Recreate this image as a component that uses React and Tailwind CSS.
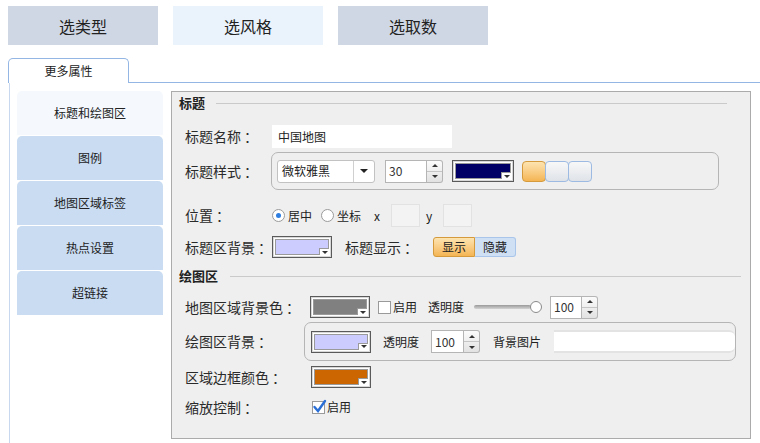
import React from "react";

const FONT = { fontFamily: '"Microsoft YaHei", "Noto Sans CJK SC", "Noto Sans", sans-serif' };

const SIDE_ITEMS = ["标题和绘图区", "图例", "地图区域标签", "热点设置", "超链接"];

function ColorBox({ color, w = "w-[60px]" }) {
  return (
    <div className={`${w} h-[22px] border border-[#5a5a5a] bg-white p-[2px] shadow-[inset_0_0_0_1px_#d8d8d8]`}>
      <div className="relative h-full border border-[#9a9a9a]" style={{ background: color }}>
        <div className="absolute right-[-1px] bottom-[-1px] w-[10px] h-[7px] bg-white border-l border-t border-[#9a9a9a] flex items-center justify-center">
          <div className="w-0 h-0 border-l-[3px] border-r-[3px] border-t-[3px] border-l-transparent border-r-transparent border-t-[#333]" />
        </div>
      </div>
    </div>
  );
}

function Spinner({ value, w = "w-[34px]" }) {
  return (
    <div className="flex h-[23px]">
      <div className={`${w} h-full bg-white border border-[#b5b5b5] flex items-center pl-[3px] text-[12px] text-[#333]`}>{value}</div>
      <div className="w-[16px] h-full border border-l-0 border-[#b5b5b5] rounded-r-[3px] flex flex-col bg-gradient-to-b from-[#fbfbfb] to-[#e2e2e2]">
        <div className="flex-1 flex items-center justify-center border-b border-[#c5c5c5]">
          <div className="w-0 h-0 border-l-[3px] border-r-[3px] border-b-[3px] border-l-transparent border-r-transparent border-b-[#333]" />
        </div>
        <div className="flex-1 flex items-center justify-center">
          <div className="w-0 h-0 border-l-[3px] border-r-[3px] border-t-[3px] border-l-transparent border-r-transparent border-t-[#333]" />
        </div>
      </div>
    </div>
  );
}

function Checkbox({ checked }) {
  return (
    <div className="relative w-[13px] h-[13px] bg-white border border-[#9a9a9a]">
      {checked && (
        <svg className="absolute left-[-1px] top-[-3px]" width="15" height="15" viewBox="0 0 15 15">
          <path d="M2.5 8 L6 12 L13 2" fill="none" stroke="#2a6fd6" strokeWidth="2.4" strokeLinecap="round" />
        </svg>
      )}
    </div>
  );
}

function Radio({ checked }) {
  return (
    <div className="w-[13px] h-[13px] rounded-full bg-white border border-[#9a9a9a] flex items-center justify-center">
      {checked && <div className="w-[5px] h-[5px] rounded-full bg-[#2d7ee0]" />}
    </div>
  );
}

function SectionHead({ title, lineEnd, gap }) {
  return (
    <div className="flex items-center">
      <span className="text-[13px] font-bold text-[#222]">{title}</span>
      <div className={`flex-1 h-px bg-[#cacaca] ${gap} ${lineEnd}`} />
    </div>
  );
}

function Label({ text, w }) {
  return (
    <span className={`${w} text-[14px] text-[#2a2a2a] whitespace-nowrap`}>
      {text}
      <span className="ml-[3px]">：</span>
    </span>
  );
}

export default function App() {
  return (
    <div className="w-[760px] h-[443px] bg-white overflow-hidden text-[#222]" style={FONT}>
      {/* top step buttons */}
      <div className="flex gap-[15px] pl-[8px] pt-[6px]">
        <div className="w-[150px] h-[39px] bg-[#d0d7e4] flex items-center justify-center text-[16px]">选类型</div>
        <div className="w-[150px] h-[39px] bg-[#eaf2fb] flex items-center justify-center text-[16px]">选风格</div>
        <div className="w-[150px] h-[39px] bg-[#d0d7e4] flex items-center justify-center text-[16px]">选取数</div>
      </div>

      {/* tab strip */}
      <div className="flex mt-[13px] pl-[8px]">
        <div className="w-[121px] h-[25px] border border-b-0 border-[#94b6e4] rounded-t-[5px] bg-white flex items-center justify-center text-[12px]">
          更多属性
        </div>
        <div className="flex-1 border-b border-[#94b6e4]" />
      </div>

      <div className="flex ml-[9px] border-l border-[#c8d8ee] h-[360px]">
        {/* side menu */}
        <div className="w-[146px] ml-[7px] pt-[8px] flex flex-col gap-px">
          {SIDE_ITEMS.map((item, i) => (
            <div
              key={item}
              className={`h-[44px] rounded-t-[5px] flex items-center justify-center text-[12px] ${
                i === 0 ? "bg-[#f5f9fe]" : "bg-[#c9dcf2]"
              }`}
            >
              {item}
            </div>
          ))}
        </div>

        {/* property panel */}
        <div className="w-[580px] ml-[8px] mt-[8px] h-[348px] bg-[#efefef] border border-[#ababab] pl-[7px] text-[13px]">
          <div className="h-[22px] flex flex-col justify-center">
            <SectionHead title="标题" gap="ml-[11px]" lineEnd="mr-[23px]" />
          </div>

          <div className="mt-[11px] h-[23px] flex items-center pl-[6px]">
            <Label text="标题名称" w="w-[87px]" />
            <div className="w-[180px] h-[23px] bg-white flex items-center pl-[6px] text-[12px]">中国地图</div>
          </div>

          <div className="mt-[4px] h-[38px] flex items-center pl-[6px]">
            <Label text="标题样式" w="w-[86px]" />
            <div className="w-[448px] h-[38px] border border-[#b5b5b5] rounded-[7px] flex items-center pl-[5px]">
              <div className="w-[98px] h-[23px] bg-white border border-[#c2c2c2] rounded-[3px] flex">
                <div className="flex-1 flex items-center pl-[4px] text-[12px]">微软雅黑</div>
                <div className="w-[21px] border-l border-[#d0d0d0] flex items-center justify-center">
                  <div className="w-0 h-0 border-l-[4px] border-r-[4px] border-t-[4px] border-l-transparent border-r-transparent border-t-[#222]" />
                </div>
              </div>
              <div className="ml-[10px]">
                <Spinner value="30" w="w-[42px]" />
              </div>
              <div className="ml-[9px]">
                <ColorBox color="#000066" w="w-[62px]" />
              </div>
              <div className="ml-[8px] flex">
                <div className="w-[24px] h-[21px] rounded-[4px] border border-[#d49a3c] bg-gradient-to-b from-[#fde4b0] to-[#f4b553]" />
                <div className="w-[24px] h-[21px] rounded-[4px] border border-[#9dbbe2] bg-gradient-to-b from-[#f8f8f8] to-[#dfe3e8] -ml-[1px]" />
                <div className="w-[24px] h-[21px] rounded-[4px] border border-[#9dbbe2] bg-gradient-to-b from-[#f8f8f8] to-[#dfe3e8] -ml-[1px]" />
              </div>
            </div>
          </div>

          <div className="mt-[14px] h-[23px] flex items-center pl-[6px]">
            <Label text="位置" w="w-[87px]" />
            <Radio checked />
            <span className="ml-[3px] text-[12px]">居中</span>
            <div className="ml-[9px]">
              <Radio />
            </div>
            <span className="ml-[3px] text-[12px]">坐标</span>
            <span className="ml-[13px] text-[12px]">x</span>
            <div className="ml-[11px] w-[29px] h-[23px] bg-[#f3f3f3] border border-[#e2e2e2]" />
            <span className="ml-[6px] text-[12px]">y</span>
            <div className="ml-[11px] w-[29px] h-[23px] bg-[#f3f3f3] border border-[#e2e2e2]" />
          </div>

          <div className="mt-[9px] h-[22px] flex items-center pl-[6px]">
            <Label text="标题区背景" w="w-[87px]" />
            <ColorBox color="#ccccff" />
            <span className="ml-[13px] text-[14px] text-[#2a2a2a]">
              标题显示<span className="ml-[3px]">：</span>
            </span>
            <div className="ml-[15px] flex text-[12px]">
              <div className="w-[42px] h-[20px] rounded-l-[3px] border border-[#d49a3c] bg-gradient-to-b from-[#fde4b0] to-[#f4b553] flex items-center justify-center">显示</div>
              <div className="w-[41px] h-[20px] rounded-r-[3px] border border-l-0 border-[#a9c6ea] bg-[#cfe0f5] flex items-center justify-center">隐藏</div>
            </div>
          </div>

          <div className="mt-[9px] h-[18px] flex flex-col justify-center">
            <SectionHead title="绘图区" gap="ml-[12px]" lineEnd="mr-[9px]" />
          </div>

          <div className="mt-[11px] h-[22px] flex items-center pl-[6px]">
            <Label text="地图区域背景色" w="w-[125px]" />
            <ColorBox color="#808080" />
            <div className="ml-[8px]">
              <Checkbox />
            </div>
            <span className="ml-[2px] text-[12px]">启用</span>
            <span className="ml-[11px] text-[12px]">透明度</span>
            <div className="ml-[10px] flex items-center">
              <div className="w-[57px] h-[4px] rounded-full bg-gradient-to-b from-[#9a9a9a] to-[#d4d4d4]" />
              <div className="w-[12px] h-[12px] rounded-full bg-white border border-[#8a8a8a] -ml-[1px]" />
            </div>
            <div className="ml-[8px]">
              <Spinner value="100" w="w-[32px]" />
            </div>
          </div>

          <div className="mt-[4px] h-[39px] flex items-center pl-[6px]">
            <Label text="绘图区背景" w="w-[119px]" />
            <div className="w-[432px] h-[39px] border border-[#b5b5b5] rounded-[7px] flex items-center pl-[6px]">
              <ColorBox color="#ccccff" />
              <span className="ml-[12px] text-[12px]">透明度</span>
              <div className="ml-[12px]">
                <Spinner value="100" w="w-[33px]" />
              </div>
              <span className="ml-[13px] text-[12px]">背景图片</span>
              <div className="ml-[13px] flex-1 h-[23px] bg-white border-t-[2px] border-b-[2px] border-[#e3e3e3] rounded-r-[6px]" />
            </div>
          </div>

          <div className="mt-[5px] h-[22px] flex items-center pl-[6px]">
            <Label text="区域边框颜色" w="w-[126px]" />
            <ColorBox color="#cc6600" />
          </div>

          <div className="mt-[9px] h-[20px] flex items-center pl-[6px]">
            <Label text="缩放控制" w="w-[127px]" />
            <Checkbox checked />
            <span className="ml-[2px] text-[12px]">启用</span>
          </div>
        </div>
      </div>
    </div>
  );
}
